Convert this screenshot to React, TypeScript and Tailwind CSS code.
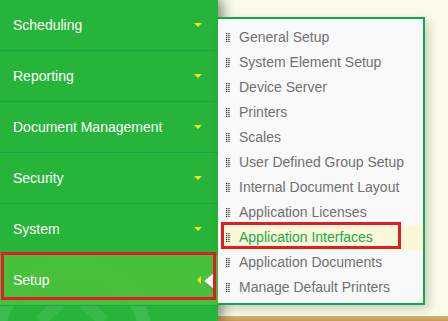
import React from "react";

const menu = [
	"Scheduling",
	"Reporting",
	"Document Management",
	"Security",
	"System",
];

const setupItems = [
	"General Setup",
	"System Element Setup",
	"Device Server",
	"Printers",
	"Scales",
	"User Defined Group Setup",
	"Internal Document Layout",
	"Application Licenses",
	"Application Interfaces",
	"Application Documents",
	"Manage Default Printers",
];

const ACTIVE = "Application Interfaces";

function Grip() {
	return (
		<svg width="4" height="9" viewBox="0 0 4 9" className="shrink-0">
			{[0, 2, 4, 6, 8].map(y => (
				<g key={y} fill="#2f2f2f">
					<rect x="0" y={y} width="1.3" height="1.2" />
					<rect x="2.3" y={y} width="1.3" height="1.2" />
				</g>
			))}
		</svg>
	);
}

export default function App() {
	return (
		<div
			className="flex w-[448px] h-[321px] overflow-hidden bg-[#fafce9] text-[14px]"
			style={{ fontFamily: '"Liberation Sans", Arial, sans-serif' }}
		>
			{/* sidebar */}
			<aside className="relative z-10 w-[218px] shrink-0 flex flex-col bg-[#26b53a] shadow-[4px_0_12px_rgba(0,0,0,0.5)]">
				<svg
					className="absolute left-0 top-[240px] pointer-events-none"
					width="218"
					height="81"
					viewBox="0 0 218 81"
				>
					<circle cx="72" cy="100" r="74" fill="none" stroke="#ffffff" strokeOpacity="0.1" strokeWidth="14" />
					<path d="M40 81 L72 52 L104 81" fill="none" stroke="#ffffff" strokeOpacity="0.08" strokeWidth="12" />
				</svg>

				{menu.map(label => (
					<div
						key={label}
						className="relative h-[51px] flex items-center justify-between pl-[13px] pr-[16px] border-b border-[#15a64a] text-white"
					>
						<span>{label}</span>
						<span className="w-0 h-0 border-l-[4px] border-r-[4px] border-t-[4px] border-l-transparent border-r-transparent border-t-[#f3e41b]" />
					</div>
				))}

				<div className="relative h-[51px] flex items-center justify-between pl-[13px] pr-[17px] border-b border-[#15a64a] bg-[#4bc13c]/90 text-white">
					<span>Setup</span>
					<span className="w-0 h-0 border-t-[4px] border-b-[4px] border-r-[4px] border-t-transparent border-b-transparent border-r-[#f3e41b]" />
					<span className="absolute right-[4px] top-[18px] w-0 h-0 border-t-[8px] border-b-[8px] border-r-[10px] border-t-transparent border-b-transparent border-r-white drop-shadow-[1px_1px_1px_rgba(0,0,0,0.25)]" />
					<div className="absolute left-[1px] right-[2px] -top-[3px] bottom-[5px] border-[3px] border-[#e31d25] pointer-events-none" />
				</div>
				<div className="flex-1" />
			</aside>

			{/* content */}
			<main className="relative flex-1 flex flex-col">
				<div className="h-[17px] shrink-0" />
				<div className="relative z-20 w-[207px] h-[288px] bg-[#f9f9f9] border-t-2 border-r-2 border-b-2 border-[#10a84b] pt-[6px] pl-[2px] shadow-[4px_4px_10px_rgba(0,0,0,0.18)]">
					{setupItems.map(item => {
						const active = item === ACTIVE;
						return (
							<div
								key={item}
								className={
									active
										? "relative h-[25px] flex items-center gap-[9px] pl-[6px] bg-[#fbf8d9] text-[#19aa4b]"
										: "relative h-[25px] flex items-center gap-[9px] pl-[6px] text-[#707070]"
								}
							>
								<Grip />
								<span>{item}</span>
								{active && (
									<div className="absolute left-[1px] w-[180px] -top-[3px] bottom-[1px] border-[3px] border-[#e31d25]" />
								)}
							</div>
						);
					})}
				</div>
				<div className="flex-1" />
				<div className="h-[5px] shrink-0 bg-gradient-to-b from-[#d8b472] to-[#c39a55]" />
			</main>
		</div>
	);
}
